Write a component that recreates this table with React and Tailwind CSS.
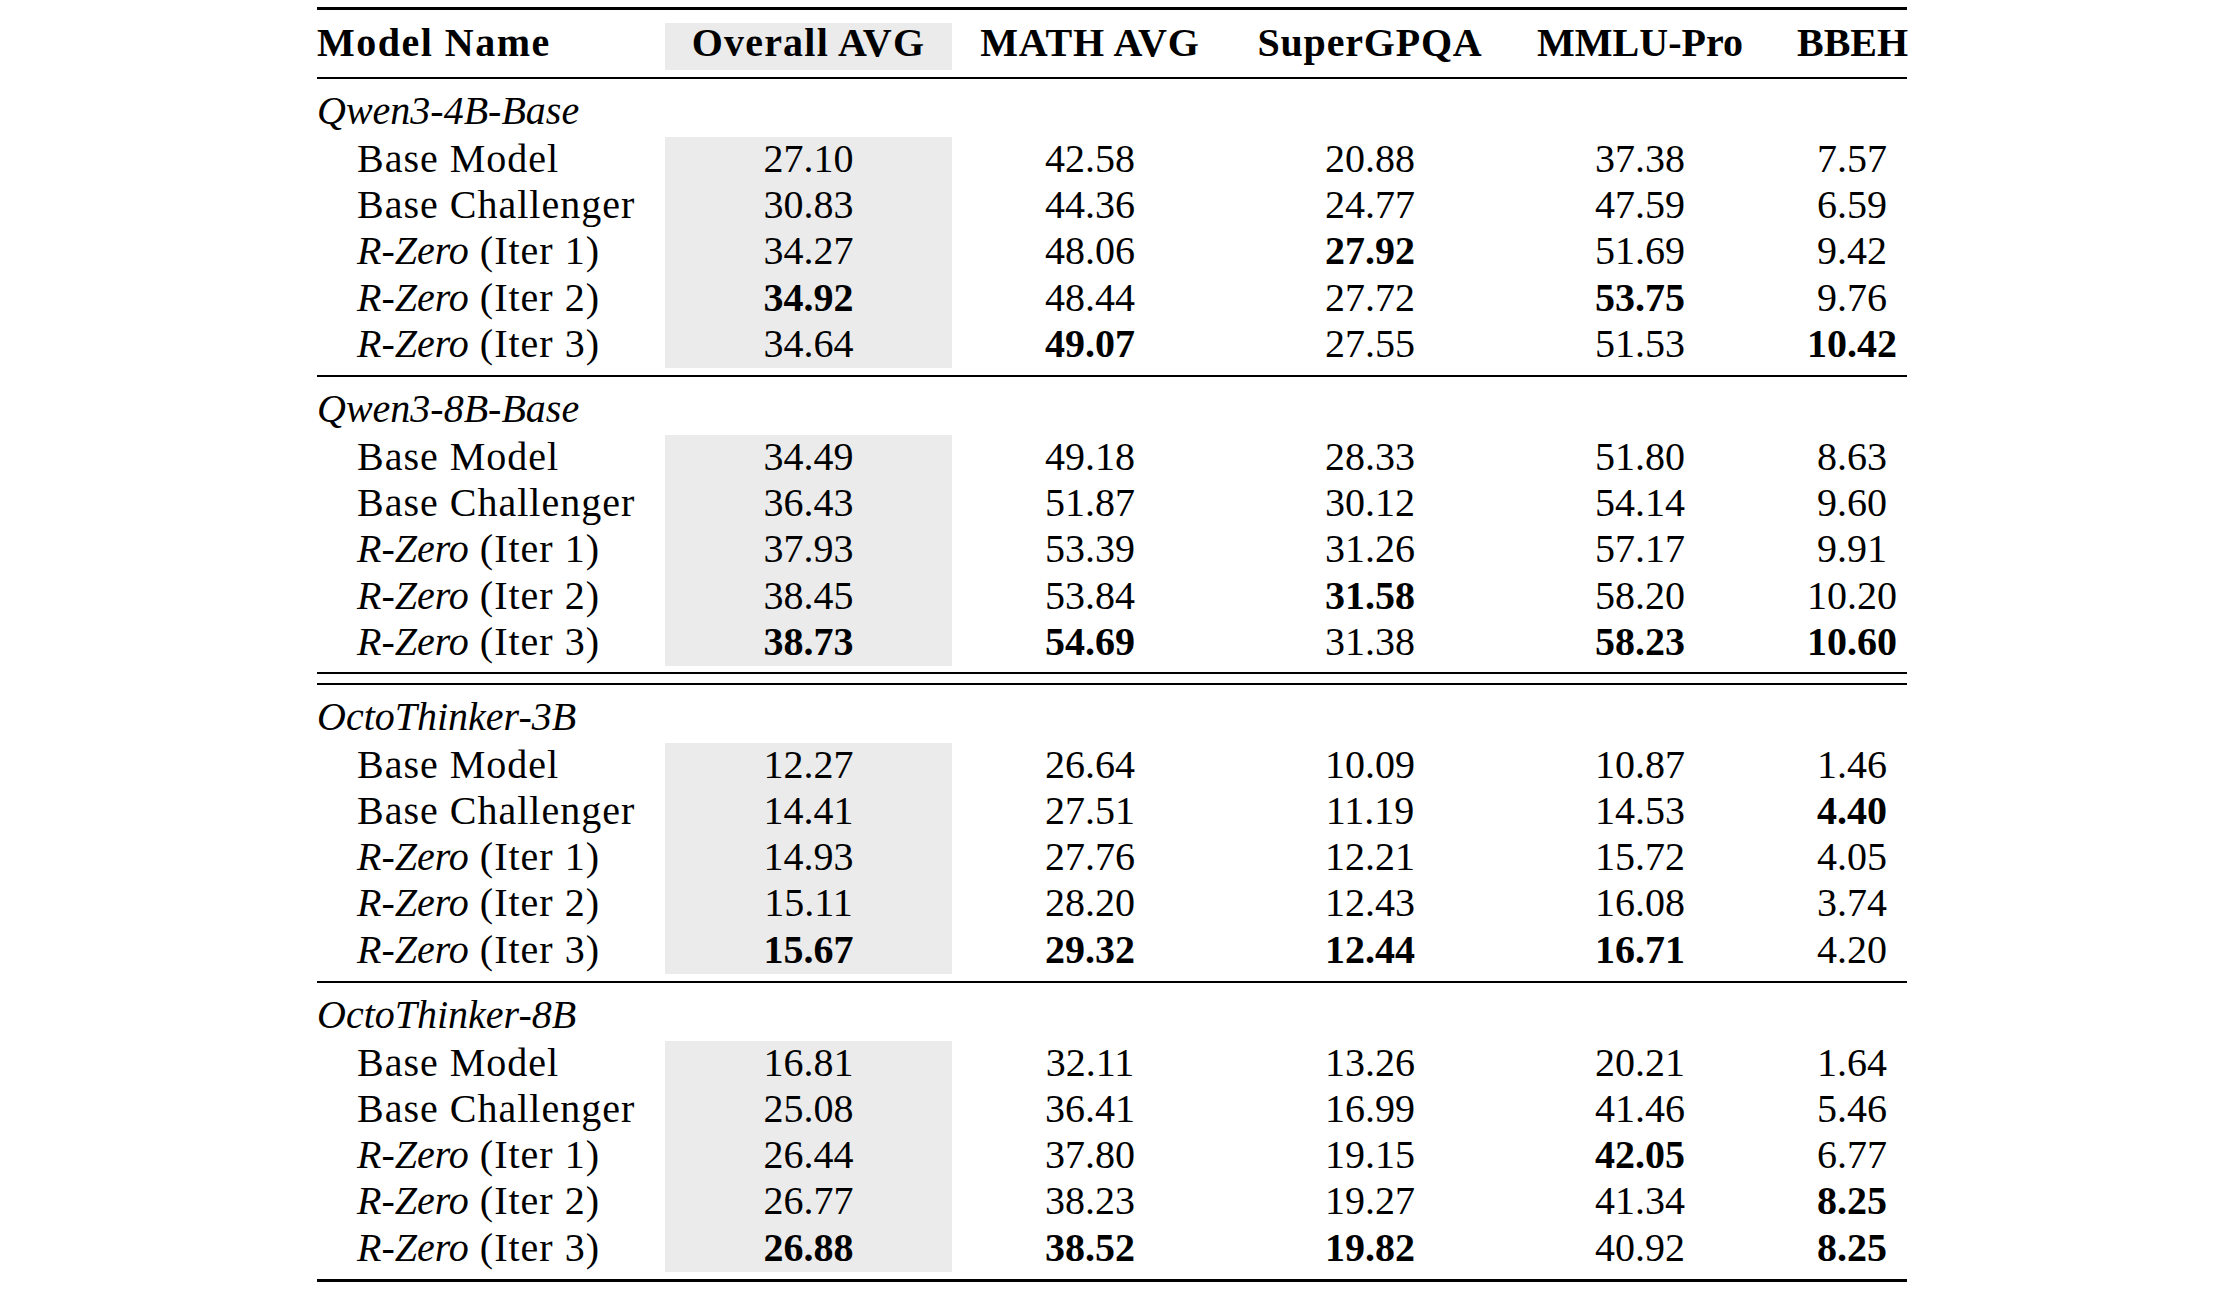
import React from "react";

const COLS = "grid grid-cols-[348px_287px_276px_284px_256px_139px]";

const groups = [
  {
    name: "Qwen3-4B-Base",
    rows: [
      ["27.10", "42.58", "20.88", "37.38", "7.57"],
      ["30.83", "44.36", "24.77", "47.59", "6.59"],
      ["34.27", "48.06", "*27.92", "51.69", "9.42"],
      ["*34.92", "48.44", "27.72", "*53.75", "9.76"],
      ["34.64", "*49.07", "27.55", "51.53", "*10.42"],
    ],
  },
  {
    name: "Qwen3-8B-Base",
    rows: [
      ["34.49", "49.18", "28.33", "51.80", "8.63"],
      ["36.43", "51.87", "30.12", "54.14", "9.60"],
      ["37.93", "53.39", "31.26", "57.17", "9.91"],
      ["38.45", "53.84", "*31.58", "58.20", "10.20"],
      ["*38.73", "*54.69", "31.38", "*58.23", "*10.60"],
    ],
  },
  {
    name: "OctoThinker-3B",
    rows: [
      ["12.27", "26.64", "10.09", "10.87", "1.46"],
      ["14.41", "27.51", "11.19", "14.53", "*4.40"],
      ["14.93", "27.76", "12.21", "15.72", "4.05"],
      ["15.11", "28.20", "12.43", "16.08", "3.74"],
      ["*15.67", "*29.32", "*12.44", "*16.71", "4.20"],
    ],
  },
  {
    name: "OctoThinker-8B",
    rows: [
      ["16.81", "32.11", "13.26", "20.21", "1.64"],
      ["25.08", "36.41", "16.99", "41.46", "5.46"],
      ["26.44", "37.80", "19.15", "*42.05", "6.77"],
      ["26.77", "38.23", "19.27", "41.34", "*8.25"],
      ["*26.88", "*38.52", "*19.82", "40.92", "*8.25"],
    ],
  },
];

function RowLabel({ i }) {
  if (i === 0) return <>Base Model</>;
  if (i === 1) return <>Base Challenger</>;
  return (
    <>
      <i className="tracking-[0px]">R-Zero</i> (Iter {i - 1})
    </>
  );
}

function Cell({ v, idx }) {
  const bold = v.startsWith("*");
  const text = bold ? v.slice(1) : v;
  const base = "text-center";
  const cls =
    idx === 0
      ? `${base} bg-[#ebebeb]`
      : idx === 4
      ? `${base} pl-[29px]`
      : base;
  return <div className={`${cls} ${bold ? "font-bold" : ""}`}>{text}</div>;
}

function Group({ g }) {
  return (
    <div>
      <div className="h-[58px] pt-[9px] leading-[46px] italic">{g.name}</div>
      {g.rows.map((r, i) => (
        <div key={i} className={`${COLS} h-[46.2px] leading-[43px]`}>
          <div className="pl-[40px] tracking-[1px] whitespace-nowrap">
            <RowLabel i={i} />
          </div>
          {r.map((v, j) => (
            <Cell key={j} v={v} idx={j} />
          ))}
        </div>
      ))}
    </div>
  );
}

export default function App() {
  return (
    <div className="min-h-screen bg-white pl-[317px] pt-[7px] text-black font-['Liberation_Serif',serif] text-[40px]">
      <div className="w-[1590px]">
        <div className="h-[3px] bg-black" />
        <div className={`${COLS} mt-[13px] h-[47px] leading-[40px] font-bold`}>
          <div className="tracking-[1.5px] whitespace-nowrap">Model Name</div>
          <div className="bg-[#ebebeb] text-center tracking-[1.2px]">Overall AVG</div>
          <div className="text-center tracking-[0.8px]">MATH AVG</div>
          <div className="text-center tracking-[0.8px]">SuperGPQA</div>
          <div className="text-center">MMLU-Pro</div>
          <div className="text-center pl-[29px]">BBEH</div>
        </div>
        <div className="mt-[7px] h-[2px] bg-black" />

        <Group g={groups[0]} />
        <div className="mt-[7px] h-[2px] bg-black" />

        <Group g={groups[1]} />
        <div className="mt-[6px] h-[2px] bg-black" />
        <div className="mt-[9px] h-[2px] bg-black" />

        <Group g={groups[2]} />
        <div className="mt-[7px] h-[2px] bg-black" />

        <Group g={groups[3]} />
        <div className="mt-[7px] h-[3px] bg-black" />
      </div>
    </div>
  );
}
